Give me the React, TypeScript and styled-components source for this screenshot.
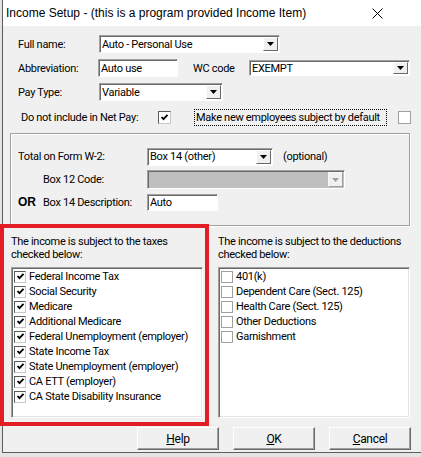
import React from 'react';
import styled, { createGlobalStyle } from 'styled-components';

const GlobalStyle = createGlobalStyle`
  html, body {
    margin: 0;
    padding: 0;
    background: #e4e4e4;
  }
  body {
    font-family: Roboto, "Liberation Sans", Arial, sans-serif;
    font-size: 11px;
    letter-spacing: -0.3px;
    color: #000;
  }
`;

const TAXES = [
  'Federal Income Tax',
  'Social Security',
  'Medicare',
  'Additional Medicare',
  'Federal Unemployment (employer)',
  'State Income Tax',
  'State Unemployment (employer)',
  'CA ETT (employer)',
  'CA State Disability Insurance',
];

const DEDUCTIONS = [
  '401(k)',
  'Dependent Care (Sect. 125)',
  'Health Care (Sect. 125)',
  'Other Deductions',
  'Garnishment',
];

const Window = styled.div`
  position: relative;
  margin-left: 2px;
  width: 419px;
  height: 453px;
  box-sizing: border-box;
  border-left: 1px solid #5c5c5c;
  border-bottom: 1px solid #5c5c5c;
  background: #f0f0f0;
  display: flex;
  flex-direction: column;
`;

const TitleBar = styled.div`
  height: 26px;
  flex: none;
  background: #fff;
  display: flex;
  align-items: center;
  justify-content: space-between;
  padding: 0 38px 0 3px;
  font-family: "Liberation Sans", Arial, sans-serif;
  font-size: 12px;
  letter-spacing: 0;
`;

const Form = styled.div`
  display: flex;
  flex-direction: column;
  gap: 6px;
  padding: 9px 0 0 15px;
`;

const Row = styled.div<{ $h?: number }>`
  display: flex;
  align-items: center;
  height: ${p => p.$h ?? 18}px;
`;

const Label = styled.span<{ $w?: number; $indent?: number }>`
  box-sizing: border-box;
  width: ${p => (p.$w ? `${p.$w}px` : 'auto')};
  padding-left: ${p => p.$indent ?? 0}px;
  flex: none;
  white-space: nowrap;
`;

const Bold = styled.span`
  font-family: "Liberation Sans", Arial, sans-serif;
  font-weight: bold;
  font-size: 12px;
  letter-spacing: 0;
  width: 25px;
  display: inline-block;
`;

const Field = styled.div<{ $w: number; $h?: number; $disabled?: boolean }>`
  width: ${p => p.$w}px;
  height: ${p => p.$h ?? 18}px;
  flex: none;
  box-sizing: border-box;
  display: flex;
  align-items: center;
  background: ${p => (p.$disabled ? '#bfbfbf' : '#fff')};
  border: 1px solid;
  border-color: #a0a0a0 #fff #fff #a0a0a0;
  box-shadow: inset 1px 1px 0 #696969;
  padding: 1px 1px 1px 2px;
`;

const FieldText = styled.span`
  flex: 1;
  white-space: nowrap;
  overflow: hidden;
`;

const DropBtn = styled.div<{ $disabled?: boolean }>`
  width: 15px;
  height: 100%;
  box-sizing: border-box;
  background: #f0f0f0;
  border: 1px solid;
  border-color: ${p => (p.$disabled ? '#f8f8f8 #a0a0a0 #a0a0a0 #f8f8f8' : '#fff #696969 #696969 #fff')};
  display: flex;
  align-items: center;
  justify-content: center;
`;

const Check = styled.div<{ $size?: number; $light?: boolean }>`
  width: ${p => p.$size ?? 13}px;
  height: ${p => p.$size ?? 13}px;
  flex: none;
  box-sizing: border-box;
  background: #fff;
  border: 1px solid;
  border-color: ${p => (p.$light ? '#a0a0a0' : '#5a5a5a #c8c8c8 #c8c8c8 #5a5a5a')};
  display: flex;
  align-items: center;
  justify-content: center;
`;

const FocusLabel = styled.span`
  box-sizing: border-box;
  width: 193px;
  border: 1px dotted #000;
  padding: 1px 0 1px 1px;
  white-space: nowrap;
`;

const GroupBox = styled.div`
  margin-left: -8px;
  width: 400px;
  height: 93px;
  box-sizing: border-box;
  border: 1px solid #a0a0a0;
  box-shadow: 1px 1px 0 #fff, inset 1px 1px 0 #fff;
  display: flex;
  flex-direction: column;
  gap: 4px;
  padding: 13px 0 0 7px;
`;

const Lower = styled.div`
  display: flex;
  gap: 15px;
  padding: 9px 0 0 8px;
`;

const Panel = styled.div<{ $w: number }>`
  width: ${p => p.$w}px;
  display: flex;
  flex-direction: column;
`;

const Heading = styled.div`
  line-height: 13px;
  height: 26px;
  margin-bottom: 6px;
  white-space: nowrap;
`;

const ListBox = styled.div`
  height: 151px;
  box-sizing: border-box;
  background: #fff;
  border: 1px solid;
  border-color: #a0a0a0 #fff #fff #a0a0a0;
  box-shadow: inset 1px 1px 0 #696969, inset -1px -1px 0 #e3e3e3;
  padding: 1px 0 0 2px;
`;

const ListItem = styled.div`
  height: 15px;
  display: flex;
  align-items: center;
  gap: 3px;
  white-space: nowrap;
`;

const ButtonRow = styled.div`
  display: flex;
  justify-content: flex-end;
  gap: 14px;
  padding: 9px 10px 0 0;
`;

const Button = styled.div`
  width: 82px;
  height: 23px;
  box-sizing: border-box;
  background: #f0f0f0;
  border: 1px solid;
  border-color: #fff #696969 #696969 #fff;
  box-shadow: inset -1px -1px 0 #a0a0a0;
  display: flex;
  align-items: center;
  justify-content: center;
  font-size: 12px;
`;

const Hotkey = styled.span`
  text-decoration: underline;
`;

const RedMark = styled.div`
  position: absolute;
  left: -3px;
  top: 224px;
  width: 209px;
  height: 202px;
  box-sizing: border-box;
  border: 4px solid #e41c24;
  pointer-events: none;
`;

const Arrow = ({ color = '#000' }: { color?: string }) => (
  <svg width="7" height="4" viewBox="0 0 7 4">
    <polygon points="0,0 7,0 3.5,4" fill={color} />
  </svg>
);

const Tick = ({ size = 9 }: { size?: number }) => (
  <svg width={size} height={size} viewBox="0 0 9 9">
    <path d="M1.5 4 L3.5 6.2 L7.5 1.8" stroke="#000" strokeWidth="1.8" fill="none" />
  </svg>
);

const CloseIcon = () => (
  <svg width="11" height="11" viewBox="0 0 11 11">
    <path d="M0.5 0.5 L10.5 10.5 M10.5 0.5 L0.5 10.5" stroke="#000" strokeWidth="1" />
  </svg>
);

const Combo = ({ w, text, h, disabled }: { w: number; text?: string; h?: number; disabled?: boolean }) => (
  <Field $w={w} $h={h} $disabled={disabled}>
    <FieldText>{text}</FieldText>
    <DropBtn $disabled={disabled}>
      <Arrow color={disabled ? '#a0a0a0' : '#000'} />
    </DropBtn>
  </Field>
);

const CheckList = ({ items, checked }: { items: string[]; checked: boolean }) => (
  <ListBox>
    {items.map(item => (
      <ListItem key={item}>
        <Check $size={12} $light={!checked}>
          {checked && <Tick />}
        </Check>
        {item}
      </ListItem>
    ))}
  </ListBox>
);

export default function App() {
  return (
    <>
      <GlobalStyle />
      <Window>
        <TitleBar>
          <span>Income Setup - (this is a program provided Income Item)</span>
          <CloseIcon />
        </TitleBar>

        <Form>
          <Row>
            <Label $w={81}>Full name:</Label>
            <Combo w={181} text="Auto - Personal Use" />
          </Row>
          <Row>
            <Label $w={80}>Abbreviation:</Label>
            <Field $w={80}>
              <FieldText>Auto use</FieldText>
            </Field>
            <Label $w={71} $indent={15}>WC code</Label>
            <Combo w={161} h={16} text="EXEMPT" />
          </Row>
          <Row>
            <Label $w={81}>Pay Type:</Label>
            <Combo w={124} text="Variable" />
          </Row>
          <Row $h={20}>
            <Label $w={140} $indent={3}>Do not include in Net Pay:</Label>
            <Check>
              <Tick size={9} />
            </Check>
            <Label $w={23} />
            <FocusLabel>Make new employees subject by default</FocusLabel>
            <Label $w={11} />
            <Check $light />
          </Row>

          <GroupBox>
            <Row $h={19}>
              <Label $w={129}>Total on Form W-2:</Label>
              <Combo w={126} text="Box 14 (other)" />
              <Label $indent={10}>(optional)</Label>
            </Row>
            <Row $h={19}>
              <Label $w={129} $indent={25}>Box 12 Code:</Label>
              <Combo w={198} h={19} disabled />
            </Row>
            <Row>
              <Label $w={129}>
                <Bold>OR</Bold>Box 14 Description:
              </Label>
              <Field $w={71} $h={17}>
                <FieldText>Auto</FieldText>
              </Field>
            </Row>
          </GroupBox>
        </Form>

        <Lower>
          <Panel $w={192}>
            <Heading>
              The income is subject to the taxes
              <br />
              checked below:
            </Heading>
            <CheckList items={TAXES} checked />
          </Panel>
          <Panel $w={192}>
            <Heading>
              The income is subject to the deductions
              <br />
              checked below:
            </Heading>
            <CheckList items={DEDUCTIONS} checked={false} />
          </Panel>
        </Lower>

        <ButtonRow>
          <Button>
            <span><Hotkey>H</Hotkey>elp</span>
          </Button>
          <Button>
            <span><Hotkey>O</Hotkey>K</span>
          </Button>
          <Button>
            <span><Hotkey>C</Hotkey>ancel</span>
          </Button>
        </ButtonRow>

        <RedMark />
      </Window>
    </>
  );
}
